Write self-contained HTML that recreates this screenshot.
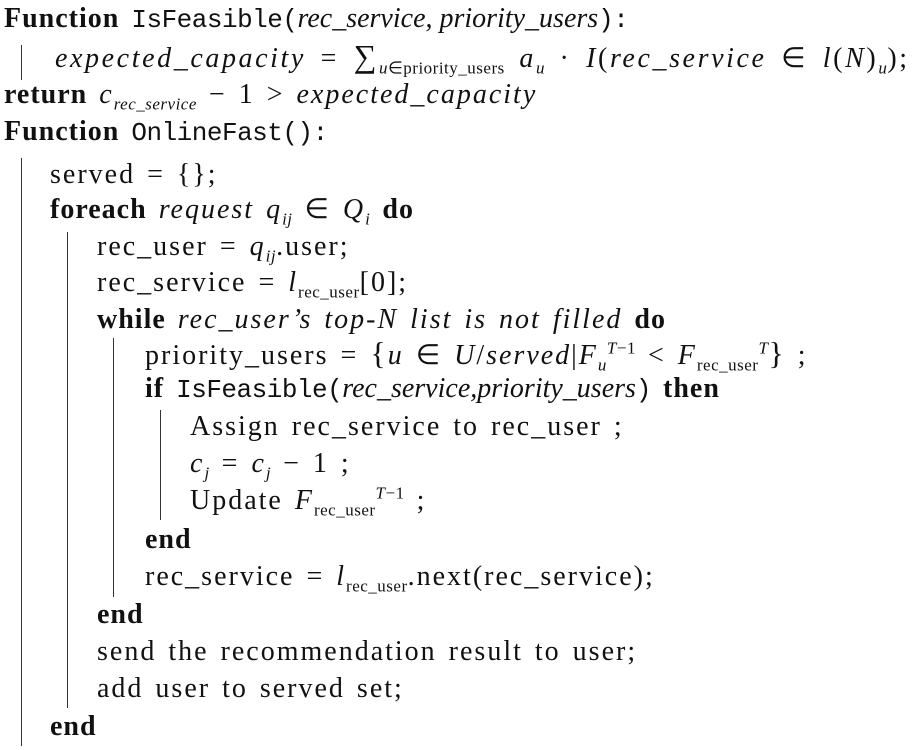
<!DOCTYPE html>
<html><head><meta charset="utf-8"><style>
body{margin:0;width:922px;height:750px;background:#fff;position:relative;overflow:hidden;font-family:"Liberation Serif",serif;font-size:28px;color:#111}
.l{position:absolute;line-height:27px;white-space:nowrap;letter-spacing:2px;word-spacing:3px}
b{font-weight:bold;letter-spacing:1px}
.m{font-family:"Liberation Mono",monospace;font-size:26px;letter-spacing:-0.5px;word-spacing:0}
i{font-style:italic}
.t{letter-spacing:0px;word-spacing:0}
sub,sup{font-size:17px;line-height:0;letter-spacing:0.5px}
.bar{position:absolute;width:1.3px;background:#333}
</style></head><body>
<div class="bar" style="left:21px;top:45px;height:35px"></div>
<div class="bar" style="left:21px;top:158px;height:588px"></div>
<div class="bar" style="left:67px;top:232px;height:476px"></div>
<div class="bar" style="left:113px;top:338px;height:259px"></div>
<div class="bar" style="left:160px;top:410px;height:110px"></div>

<div class="l" style="left:4px;top:5px"><b>Function</b> <span class="m">IsFeasible(</span><i class="t">rec_service, priority_users</i><span class="m">):</span></div>
<div class="l" style="left:55px;top:43px;letter-spacing:2.6px;word-spacing:5px"><i>expected_capacity</i> = <span style="font-size:32px">∑</span><sub><i>u</i>∈priority_users</sub> <i>a<sub>u</sub></i> · <i>I</i>(<i>rec_service</i> ∈ <i>l</i>(<i>N</i>)<sub><i>u</i></sub>);</div>
<div class="l" style="left:4px;top:81px"><b>return</b> <i>c<sub>rec_service</sub></i> − 1 &gt; <i>expected_capacity</i></div>
<div class="l" style="left:4px;top:118px"><b>Function</b> <span class="m">OnlineFast():</span></div>
<div class="l" style="left:50px;top:161px">served = {};</div>
<div class="l" style="left:50px;top:196px"><b>foreach</b> <i>request q<sub>ij</sub></i> ∈ <i>Q<sub>i</sub></i> <b>do</b></div>
<div class="l" style="left:97px;top:233px">rec_user = <i>q<sub>ij</sub></i>.user;</div>
<div class="l" style="left:97px;top:269px">rec_service = <i>l</i><sub>rec_user</sub>[0];</div>
<div class="l" style="left:97px;top:306px"><b>while</b> <i>rec_user’s top-N list is not filled</i> <b>do</b></div>
<div class="l" style="left:145px;top:340px">priority_users = <span style="font-size:32px">{</span><i>u</i> ∈ <i>U</i>/<i>served</i>|<i>F</i><sub><i>u</i></sub><sup><i>T</i>−1</sup> &lt; <i>F</i><sub>rec_user</sub><sup><i>T</i></sup><span style="font-size:32px">}</span> ;</div>
<div class="l" style="left:145px;top:375px"><b>if</b> <span class="m">IsFeasible(</span><i class="t">rec_service,priority_users</i><span class="m">)</span> <b>then</b></div>
<div class="l" style="left:190px;top:413px">Assign rec_service to rec_user ;</div>
<div class="l" style="left:190px;top:450px"><i>c<sub>j</sub></i> = <i>c<sub>j</sub></i> − 1 ;</div>
<div class="l" style="left:190px;top:487px">Update <i>F</i><sub>rec_user</sub><sup><i>T</i>−1</sup> ;</div>
<div class="l" style="left:145px;top:526px"><b>end</b></div>
<div class="l" style="left:145px;top:563px">rec_service = <i>l</i><sub>rec_user</sub>.next(rec_service);</div>
<div class="l" style="left:97px;top:601px"><b>end</b></div>
<div class="l" style="left:97px;top:638px">send the recommendation result to user;</div>
<div class="l" style="left:97px;top:675px">add user to served set;</div>
<div class="l" style="left:50px;top:713px"><b>end</b></div>
</body></html>
